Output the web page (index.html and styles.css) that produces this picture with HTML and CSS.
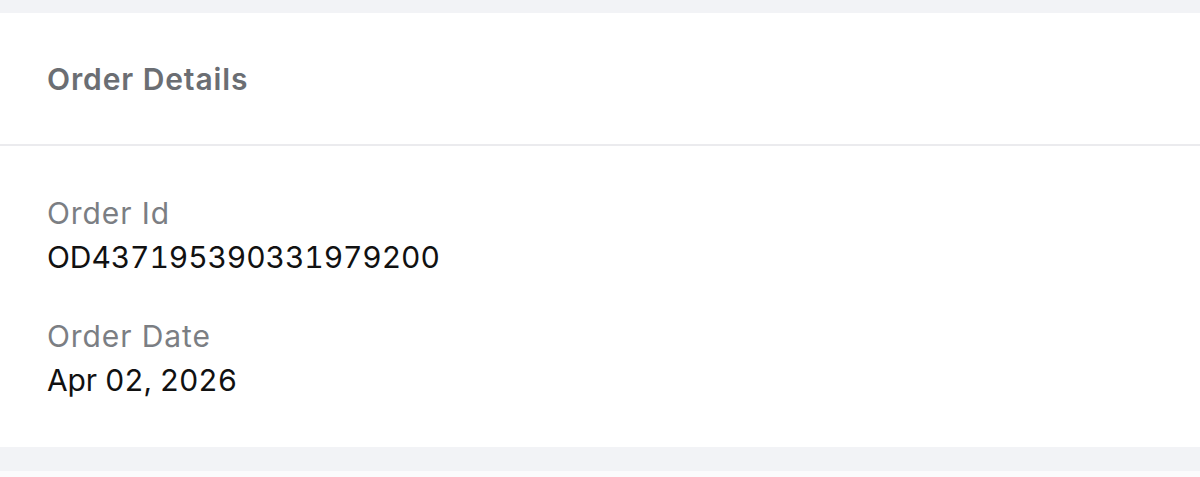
FILE: index.html
```html
<!DOCTYPE html>
<html>
  <head>
    <link rel="stylesheet" href="styles.css">
  </head>
<body>
<div class="page">
  <div class="card">
    <div class="card-header">
      <h2 class="card-title">Order Details</h2>
    </div>
    <div class="card-body">
      <div class="field">
        <div class="field-label">Order Id</div>
        <div class="field-value">OD437195390331979200</div>
      </div>
      <div class="field">
        <div class="field-label">Order Date</div>
        <div class="field-value">Apr 02, 2026</div>
      </div>
    </div>
  </div>
  <div class="card card-next"></div>
</div>
</body>
</html>
```

FILE: styles.css
```css
* {
  box-sizing: border-box;
}

body {
  margin: 0;
  background-color: #f2f3f6;
  font-family: Inter, "Noto Sans", sans-serif;
  overflow: hidden;
}

.page {
  padding-top: 13px;
  display: flex;
  flex-direction: column;
  gap: 24px;
}

.card {
  background-color: #ffffff;
}

.card-header {
  padding: 48px 47px 47px;
  border-bottom: 2px solid #ebebee;
}

.card-title {
  margin: 0;
  font-size: 30px;
  line-height: 36px;
  font-weight: 600;
  letter-spacing: 0.9px;
  color: #6b6e73;
}

.card-body {
  padding: 45px 47px 45px;
  display: flex;
  flex-direction: column;
  gap: 35px;
}

.field-label {
  font-size: 30px;
  line-height: 44px;
  letter-spacing: 0.9px;
  color: #7b7e83;
}

.field-value {
  font-size: 30px;
  line-height: 44px;
  letter-spacing: -0.1px;
  font-feature-settings: "tnum";
  color: #111111;
}

.card-next {
  height: 6px;
  background-color: #fbfbfc;
}
```
